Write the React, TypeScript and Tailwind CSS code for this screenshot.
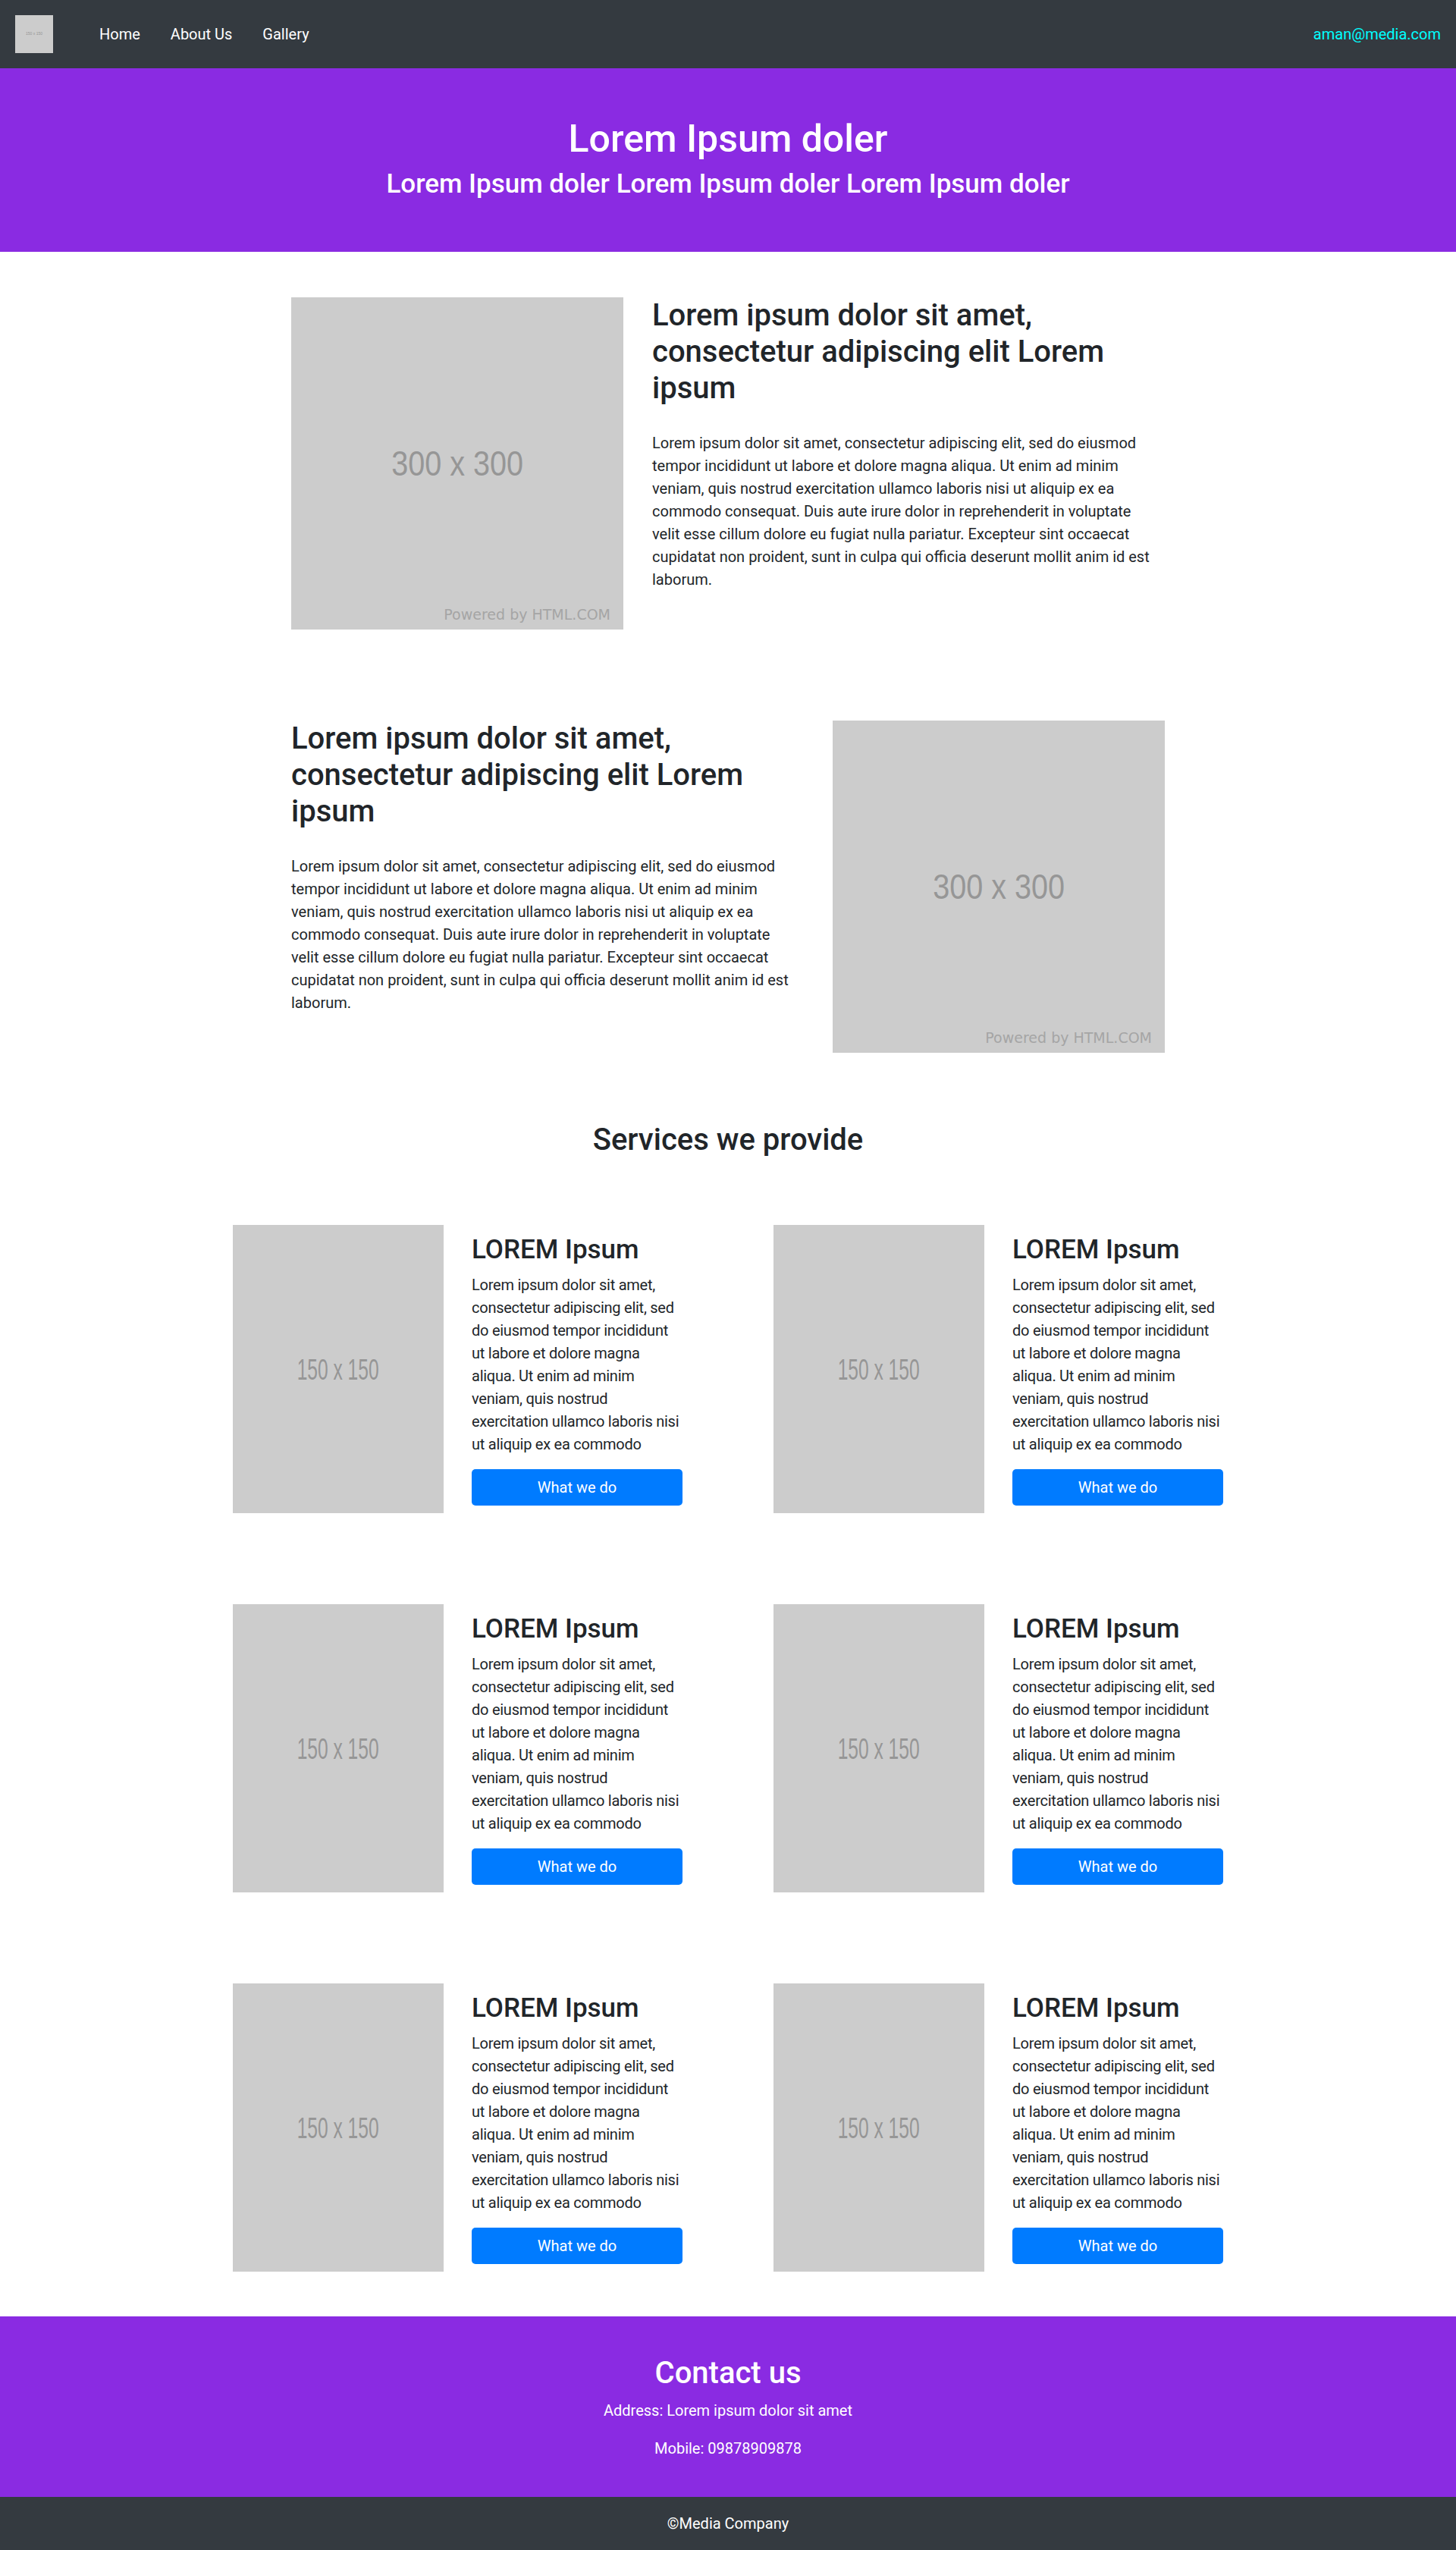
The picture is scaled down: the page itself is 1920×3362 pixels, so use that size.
import React from "react";

const LONG =
  "Lorem ipsum dolor sit amet, consectetur adipiscing elit, sed do eiusmod tempor incididunt ut labore et dolore magna aliqua. Ut enim ad minim veniam, quis nostrud exercitation ullamco laboris nisi ut aliquip ex ea commodo consequat. Duis aute irure dolor in reprehenderit in voluptate velit esse cillum dolore eu fugiat nulla pariatur. Excepteur sint occaecat cupidatat non proident, sunt in culpa qui officia deserunt mollit anim id est laborum.";

const SHORT =
  "Lorem ipsum dolor sit amet, consectetur adipiscing elit, sed do eiusmod tempor incididunt ut labore et dolore magna aliqua. Ut enim ad minim veniam, quis nostrud exercitation ullamco laboris nisi ut aliquip ex ea commodo";

function BigPlaceholder() {
  return (
    <div className="relative w-[438px] h-[438px] shrink-0 bg-[#cccccc] flex items-center justify-center">
      <span className="font-['Liberation_Sans',Arial,sans-serif] text-[46px] leading-none text-[#969696] scale-x-[0.86]">
        300 x 300
      </span>
      <span className="absolute right-[17px] bottom-[10px] font-['DejaVu_Sans',sans-serif] text-[19px] leading-none text-[#a5a5a5]">
        Powered by HTML.COM
      </span>
    </div>
  );
}

function SmallPlaceholder() {
  return (
    <div className="w-[278px] h-[380px] shrink-0 bg-[#cccccc] flex items-center justify-center">
      <span className="font-['Liberation_Sans',Arial,sans-serif] text-[39px] leading-none text-[#969696] scale-x-[0.63]">
        150 x 150
      </span>
    </div>
  );
}

function TextBlock() {
  return (
    <div className="w-[676px] shrink-0">
      <h2 className="text-[40px] leading-[48px] font-medium text-[#212529] mb-[33px]">
        Lorem ipsum dolor sit amet, consectetur adipiscing elit Lorem ipsum
      </h2>
      <p className="w-[665px] text-[20px] leading-[30px] text-[#212529]">{LONG}</p>
    </div>
  );
}

function Card() {
  return (
    <div className="w-[593px] flex gap-[37px]">
      <SmallPlaceholder />
      <div className="w-[278px] shrink-0 pt-[12px]">
        <h3 className="text-[35px] leading-[42px] font-medium text-[#212529] mb-[10px]">
          LOREM Ipsum
        </h3>
        <p className="text-[20px] leading-[30px] text-[#212529] tracking-[-0.25px]">{SHORT}</p>
        <button className="mt-[18px] w-full h-[48px] rounded-[5px] bg-[#007bff] text-white text-[20px] leading-[30px]">
          What we do
        </button>
      </div>
    </div>
  );
}

export default function App() {
  return (
    <div className="font-['Roboto','Noto_Sans',sans-serif] bg-white w-[1920px]">
      <nav className="h-[90px] bg-[#343a40] flex items-center px-[20px]">
        <div className="w-[50px] h-[50px] bg-[#cccccc] flex items-center justify-center">
          <span className="text-[5px] text-[#969696] font-['Liberation_Sans',sans-serif]">150 x 150</span>
        </div>
        <ul className="flex ml-[41px] text-[20px] leading-[30px] text-white">
          <li className="px-[20px]">Home</li>
          <li className="px-[20px]">About Us</li>
          <li className="px-[20px]">Gallery</li>
        </ul>
        <div className="ml-auto text-[20px] leading-[30px] text-[#00ffff]">aman@media.com</div>
      </nav>

      <header className="h-[242px] bg-[#8a2be2] text-white text-center pt-[63px]">
        <h1 className="text-[50px] leading-[60px] font-medium mb-[9px]">Lorem Ipsum doler</h1>
        <h3 className="text-[35px] leading-[42px] font-medium">
          Lorem Ipsum doler Lorem Ipsum doler Lorem Ipsum doler
        </h3>
      </header>

      <main className="w-[1152px] mx-auto pt-[60px]">
        <section className="flex gap-[38px]">
          <BigPlaceholder />
          <TextBlock />
        </section>
        <section className="flex gap-[38px] mt-[120px]">
          <TextBlock />
          <BigPlaceholder />
        </section>
      </main>

      <h2 className="mt-[91px] text-center text-[40px] leading-[48px] font-medium text-[#212529]">
        Services we provide
      </h2>

      <div className="mt-[88px] flex flex-col gap-[120px]">
        {[0, 1, 2].map((r) => (
          <div key={r} className="flex justify-center gap-[120px]">
            <Card />
            <Card />
          </div>
        ))}
      </div>

      <section className="mt-[59px] h-[238px] bg-[#8a2be2] text-white text-center pt-[51px]">
        <h2 className="text-[40px] leading-[48px] font-medium mb-[10px]">Contact us</h2>
        <p className="text-[20px] leading-[30px] mb-[20px]">Address: Lorem ipsum dolor sit amet</p>
        <p className="text-[20px] leading-[30px]">Mobile: 09878909878</p>
      </section>

      <footer className="h-[70px] bg-[#343a40] text-white flex items-center justify-center text-[20px] leading-[30px]">
        ©Media Company
      </footer>
    </div>
  );
}
